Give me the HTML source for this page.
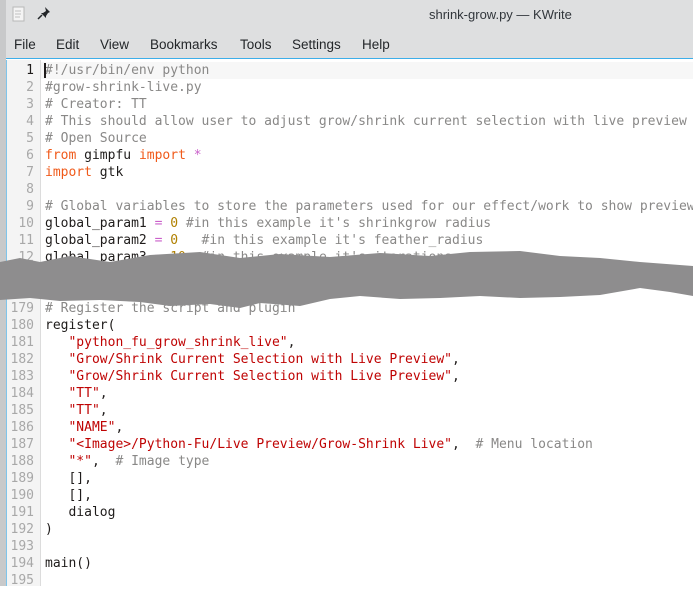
<!DOCTYPE html>
<html><head><meta charset="utf-8"><style>
*{margin:0;padding:0;box-sizing:border-box}
body{width:693px;height:586px;overflow:hidden;background:#fff;position:relative;font-family:"Liberation Sans","DejaVu Sans",sans-serif}
#strip{position:absolute;left:0;top:0;width:6px;height:586px;background:#c8c9ca}
#title{position:absolute;left:6px;top:0;width:687px;height:30px;background:#dedfe0}
#title .t{position:absolute;left:423px;top:7px;font-size:13px;color:#31363b}
#menu{position:absolute;left:6px;top:30px;width:687px;height:29px;background:#dedfe0;border-bottom:1px solid #3daee9}
#menu span{position:absolute;top:7px;font-size:13.5px;color:#232629}
#gutter{position:absolute;left:6px;top:60px;width:35px;height:526px;background:#f4f4f4;border-right:1px solid #dcdcdc;border-left:1px solid #7fc4ea}
#hl{position:absolute;left:41px;top:62px;width:652px;height:17px;background:#f7f7f7}
.l{position:absolute;left:0;width:693px;height:17px;font-family:"DejaVu Sans Mono","Liberation Mono",monospace;font-size:13px;line-height:17px;white-space:pre;margin-top:1px}
.n{position:absolute;left:0;width:34px;text-align:right;color:#a8a8a8}
.c{position:absolute;left:45px;color:#1f1c1b}
.cm{color:#898887}.k{color:#f05a1a}.s{color:#bf0303}.num{color:#b08000}.o{color:#ca60ca}
</style></head><body>
<div id="strip"></div>
<div id="title">
<svg style="position:absolute;left:6px;top:6px" width="14" height="16"><rect x="1" y="1" width="11" height="14" fill="#f4f4f4" stroke="#b8b8b8"/><path d="M3 5h6M3 8h6M3 11h5" stroke="#c0c0c0"/></svg>
<svg style="position:absolute;left:31px;top:6px" width="14" height="14"><path d="M8 1l5 5-2 1-2 3 0 2-5-5 2 0 3-2z" fill="#232629"/><path d="M5 9l-4 4" stroke="#232629" stroke-width="1.5"/></svg>
<span class="t">shrink-grow.py — KWrite</span></div>
<div id="menu"><span style="left:8px">File</span><span style="left:50px">Edit</span><span style="left:94px">View</span><span style="left:144px">Bookmarks</span><span style="left:234px">Tools</span><span style="left:286px">Settings</span><span style="left:356px">Help</span></div>
<div id="gutter"></div>
<div id="hl"></div>
<div class="l" style="top:61px"><span class="n" style="color:#1f1c1b">1</span><span class="c"><span class="cm">#!/usr/bin/env python</span></span></div>
<div class="l" style="top:78px"><span class="n">2</span><span class="c cm">#grow-shrink-live.py</span></div>
<div class="l" style="top:95px"><span class="n">3</span><span class="c cm"># Creator: TT</span></div>
<div class="l" style="top:112px"><span class="n">4</span><span class="c cm"># This should allow user to adjust grow/shrink current selection with live preview</span></div>
<div class="l" style="top:129px"><span class="n">5</span><span class="c cm"># Open Source</span></div>
<div class="l" style="top:146px"><span class="n">6</span><span class="c"><span class="k">from</span> gimpfu <span class="k">import</span> <span class="o">*</span></span></div>
<div class="l" style="top:163px"><span class="n">7</span><span class="c"><span class="k">import</span> gtk</span></div>
<div class="l" style="top:180px"><span class="n">8</span></div>
<div class="l" style="top:197px"><span class="n">9</span><span class="c cm"># Global variables to store the parameters used for our effect/work to show preview</span></div>
<div class="l" style="top:214px"><span class="n">10</span><span class="c">global_param1 <span class="o">=</span> <span class="num">0</span> <span class="cm">#in this example it's shrinkgrow radius</span></span></div>
<div class="l" style="top:231px"><span class="n">11</span><span class="c">global_param2 <span class="o">=</span> <span class="num">0</span>   <span class="cm">#in this example it's feather_radius</span></span></div>
<div class="l" style="top:248px"><span class="n">12</span><span class="c">global_param3 <span class="o">=</span> <span class="num">10</span>  <span class="cm">#in this example it's iterations</span></span></div>
<div class="l" style="top:299px"><span class="n">179</span><span class="c cm"># Register the script and plugin</span></div>
<div class="l" style="top:316px"><span class="n">180</span><span class="c">register(</span></div>
<div class="l" style="top:333px"><span class="n">181</span><span class="c">   <span class="s">"python_fu_grow_shrink_live"</span>,</span></div>
<div class="l" style="top:350px"><span class="n">182</span><span class="c">   <span class="s">"Grow/Shrink Current Selection with Live Preview"</span>,</span></div>
<div class="l" style="top:367px"><span class="n">183</span><span class="c">   <span class="s">"Grow/Shrink Current Selection with Live Preview"</span>,</span></div>
<div class="l" style="top:384px"><span class="n">184</span><span class="c">   <span class="s">"TT"</span>,</span></div>
<div class="l" style="top:401px"><span class="n">185</span><span class="c">   <span class="s">"TT"</span>,</span></div>
<div class="l" style="top:418px"><span class="n">186</span><span class="c">   <span class="s">"NAME"</span>,</span></div>
<div class="l" style="top:435px"><span class="n">187</span><span class="c">   <span class="s">"&lt;Image&gt;/Python-Fu/Live Preview/Grow-Shrink Live"</span>,  <span class="cm"># Menu location</span></span></div>
<div class="l" style="top:452px"><span class="n">188</span><span class="c">   <span class="s">"*"</span>,  <span class="cm"># Image type</span></span></div>
<div class="l" style="top:469px"><span class="n">189</span><span class="c">   [],</span></div>
<div class="l" style="top:486px"><span class="n">190</span><span class="c">   [],</span></div>
<div class="l" style="top:503px"><span class="n">191</span><span class="c">   dialog</span></div>
<div class="l" style="top:520px"><span class="n">192</span><span class="c">)</span></div>
<div class="l" style="top:537px"><span class="n">193</span></div>
<div class="l" style="top:554px"><span class="n">194</span><span class="c">main()</span></div>
<div class="l" style="top:571px"><span class="n">195</span></div>
<div style="position:absolute;left:44px;top:63px;width:2px;height:15px;background:#1f1c1b"></div>
<svg style="position:absolute;left:0;top:0" width="693" height="586">
<path fill="#8e8d8e" d="M0 262 L20 258 L40 262 L70 256 L110 262 L150 255 L200 252 L240 258 L280 254 L330 257 L380 253 L430 256 L470 252 L520 251 L560 256 L600 258 L640 262 L693 266 L693 296 L670 292 L640 288 L600 295 L560 297 L520 298 L480 296 L440 298 L400 299 L360 296 L330 299 L300 306 L260 303 L240 308 L210 304 L170 306 L140 302 L100 300 L60 301 L30 298 L0 300 Z"/>
</svg>
</body></html>
